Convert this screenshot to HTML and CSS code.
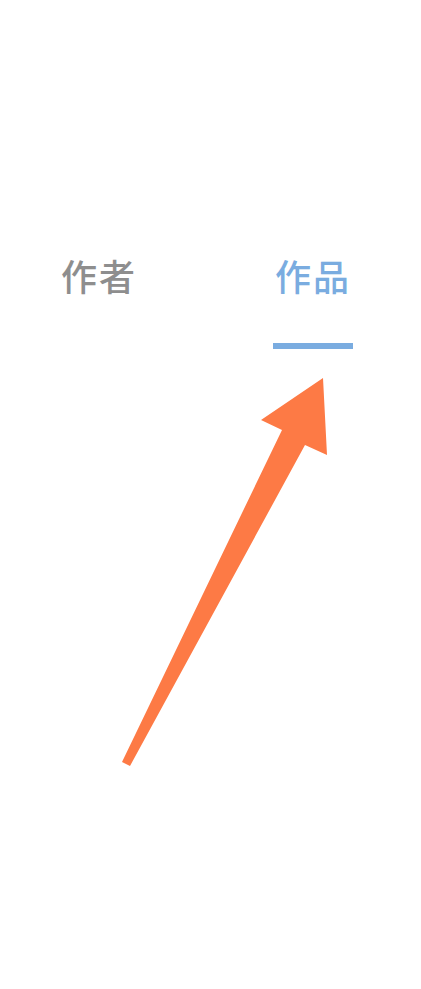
FILE: index.html
```html
<!DOCTYPE html>
<html>
    <head>
        <meta charset="utf-8">
        <title>作品</title>
        <link rel="stylesheet" href="styles.css">
    </head>
    <body>

        <div class="page">

            <div class="tabs">
                <div class="tab">
                    <span class="tab-label">作者</span>
                </div>
                <div class="tab tab-active">
                    <span class="tab-label">作品</span>
                    <span class="tab-line"></span>
                </div>
            </div>

            <!-- pointer arrow drawn over the tabs -->
            <svg class="pointer" width="421" height="989" viewBox="0 0 421 989">
                <polygon points="122,762 130,766 305,445 327,455 323,378 261,420 282,430" fill="#fd7a45"/>
            </svg>

        </div>

    </body>
</html>
```

FILE: styles.css
```css
*{
    margin: 0;
    padding: 0;
    box-sizing: border-box;
}

body, html{
    height: 100%;
    background: #fff;
    font-family: "Noto Sans CJK SC", "Noto Sans", sans-serif;
}

.page{
    position: relative;
    width: 421px;
    height: 989px;
    overflow: hidden;
}

.tabs{
    display: flex;
    justify-content: space-between;
    padding: 250px 68px 0 61px;
}

.tab{
    display: flex;
    flex-direction: column;
    align-items: center;
}

.tab-label{
    font-size: 36px;
    line-height: 50px;
    font-weight: 500;
    color: #8e8e8e;
    letter-spacing: 2px;
}

.tab-active .tab-label{
    color: #7aace0;
}

.tab-line{
    width: 80px;
    height: 6px;
    margin-top: 43px;
    background: #7aace0;
}

.pointer{
    position: absolute;
    left: 0;
    top: 0;
}
```
